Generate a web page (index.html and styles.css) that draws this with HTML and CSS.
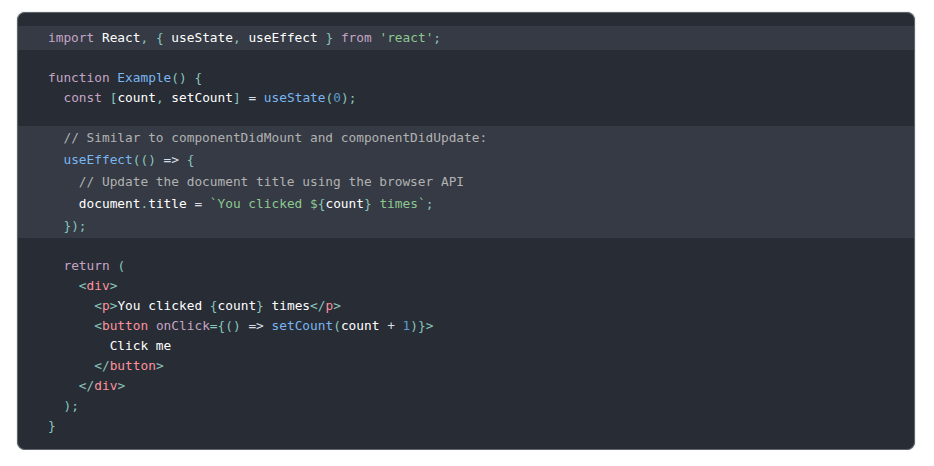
FILE: index.html
```html
<!DOCTYPE html>
<html lang="en">
<head>
<meta charset="utf-8">
<title>Code sample</title>
<link rel="stylesheet" href="styles.css">
</head>
<body>
<div class="code">
  <div class="hl hl-one">
    <div class="ln hl-ln"><span class="kw">import</span> React<span class="p">,</span> <span class="p">{</span> useState<span class="p">,</span> useEffect <span class="p">}</span> <span class="kw">from</span> <span class="str">'react'</span><span class="p">;</span></div>
  </div>
  <div class="gap gap-a"></div>
  <div class="ln"><span class="kw">function</span> <span class="fn">Example</span><span class="p">()</span> <span class="p">{</span></div>
  <div class="ln">  <span class="kw">const</span> <span class="p">[</span>count<span class="p">,</span> setCount<span class="p">]</span> <span class="op">=</span> <span class="fn">useState</span><span class="p">(</span><span class="num">0</span><span class="p">);</span></div>
  <div class="gap gap-b"></div>
  <div class="hl hl-many">
    <div class="ln hl-ln">  <span class="cm">// Similar to componentDidMount and componentDidUpdate:</span></div>
    <div class="ln hl-ln">  <span class="fn">useEffect</span><span class="p">(()</span> <span class="op">=&gt;</span> <span class="p">{</span></div>
    <div class="ln hl-ln">    <span class="cm">// Update the document title using the browser API</span></div>
    <div class="ln hl-ln">    document<span class="p">.</span>title <span class="op">=</span> <span class="str">`You clicked $</span><span class="p">{</span>count<span class="p">}</span><span class="str"> times`</span><span class="p">;</span></div>
    <div class="ln hl-ln">  <span class="p">});</span></div>
  </div>
  <div class="gap gap-a"></div>
  <div class="ln">  <span class="kw">return</span> <span class="p">(</span></div>
  <div class="ln">    <span class="p">&lt;</span><span class="tag">div</span><span class="p">&gt;</span></div>
  <div class="ln">      <span class="p">&lt;</span><span class="tag">p</span><span class="p">&gt;</span>You clicked <span class="p">{</span>count<span class="p">}</span> times<span class="p">&lt;/</span><span class="tag">p</span><span class="p">&gt;</span></div>
  <div class="ln">      <span class="p">&lt;</span><span class="tag">button</span> <span class="attr">onClick</span><span class="p">={()</span> <span class="op">=&gt;</span> <span class="fn">setCount</span><span class="p">(</span>count <span class="op">+</span> <span class="num">1</span><span class="p">)}&gt;</span></div>
  <div class="ln">        Click me</div>
  <div class="ln">      <span class="p">&lt;/</span><span class="tag">button</span><span class="p">&gt;</span></div>
  <div class="ln">    <span class="p">&lt;/</span><span class="tag">div</span><span class="p">&gt;</span></div>
  <div class="ln">  <span class="p">);</span></div>
  <div class="ln"><span class="p">}</span></div>
</div>
</body>
</html>
```

FILE: styles.css
```css
html, body {
  margin: 0;
  padding: 0;
  background: #ffffff;
}

body {
  padding: 12px 0 0 17px;
}

.code {
  box-sizing: border-box;
  width: 898px;
  height: 438px;
  background: #282c34;
  border: 1px solid #60646c;
  border-radius: 8px;
  box-shadow: 0 0 1px rgba(80, 84, 92, 0.9);
  padding: 13px 0 14px 0;
  font-family: "DejaVu Sans Mono", "Liberation Mono", monospace;
  font-size: 12.8px;
  color: #ffffff;
  overflow: hidden;
}

.ln {
  white-space: pre;
  height: 20px;
  line-height: 22px;
  padding-left: 30px;
}

.hl {
  background: #353a44;
  padding-bottom: 2px;
}

.hl-ln {
  height: 22px;
  line-height: 24px;
}

.gap-a { height: 17px; }
.gap-b { height: 19px; }

.kw { color: #c5a5c5; }
.p { color: #88c6be; }
.str { color: #8dc891; }
.fn { color: #79b6f2; }
.cm { color: #b2b2b2; }
.num { color: #5a9bcf; }
.op { color: #d7deea; }
.tag { color: #fc929e; }
.attr { color: #c5a5c5; }
```
